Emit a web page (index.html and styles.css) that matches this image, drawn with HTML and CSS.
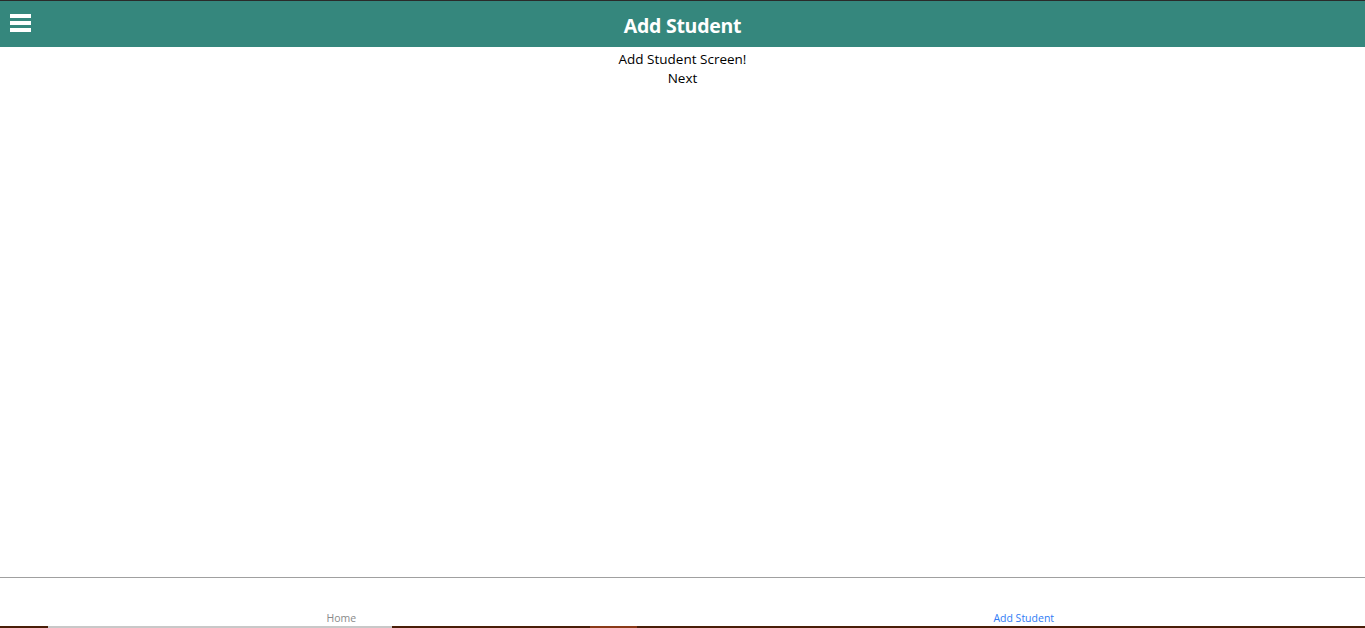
FILE: index.html
```html
<!DOCTYPE html>
<html>
<head>
<meta charset="utf-8">
<link rel="stylesheet" href="styles.css">
</head>
<body>
<div class="app">
  <header class="header">
    <button class="menu" aria-label="menu">
      <svg width="21" height="18" viewBox="0 0 21 18"><rect x="0" y="0" width="21" height="4" fill="#fff"/><rect x="0" y="7" width="21" height="4" fill="#fff"/><rect x="0" y="14" width="21" height="4" fill="#fff"/></svg>
    </button>
    <h1 class="title">Add Student</h1>
  </header>
  <main class="content">
    <div class="line">Add Student Screen!</div>
    <div class="line">Next</div>
  </main>
  <nav class="tabs">
    <div class="tab">Home</div>
    <div class="tab active">Add Student</div>
  </nav>
  <div class="strip">
    <span class="seg s1"></span><span class="seg s2"></span><span class="seg s3"></span><span class="seg s4"></span><span class="seg s5"></span>
  </div>
</div>
</body>
</html>
```
FILE: styles.css
```css
html, body { margin: 0; padding: 0; height: 100%; }
body { font-family: "Open Sans", "Noto Sans", sans-serif; background: #fff; color: #000; }
.app { display: flex; flex-direction: column; height: 628px; border-top: 1px solid #2a2a2a; box-sizing: border-box; }
.header { height: 46px; background: #35877d; display: flex; align-items: center; justify-content: center; position: relative; padding-top: 2px; box-sizing: border-box; }
.menu { position: absolute; left: 10px; top: 13px; padding: 0; border: 0; background: none; line-height: 0; }
.title { margin: 0; color: #fff; font-size: 19.5px; font-weight: 700; letter-spacing: -0.25px; }
.content { flex: 1; display: flex; flex-direction: column; align-items: center; padding-top: 3px; font-size: 13.5px; line-height: 19px; }
.tabs { height: 48px; border-top: 1px solid #a0a0a0; display: flex; }
.tab { flex: 1; display: flex; align-items: flex-end; justify-content: center; font-size: 10.5px; color: #8a8a8a; padding-bottom: 1px; }
.tab.active { color: #2f7bf5; }
.strip { height: 2px; display: flex; background: #4a1e08; }
.seg { display: block; height: 100%; }
.s1 { width: 48px; background: #4a1e08; }
.s2 { width: 344px; background: #c8c8c8; }
.s3 { width: 198px; background: #4a1e08; }
.s4 { width: 47px; background: #8a3a18; }
.s5 { flex: 1; background: #4a1e08; }
```
